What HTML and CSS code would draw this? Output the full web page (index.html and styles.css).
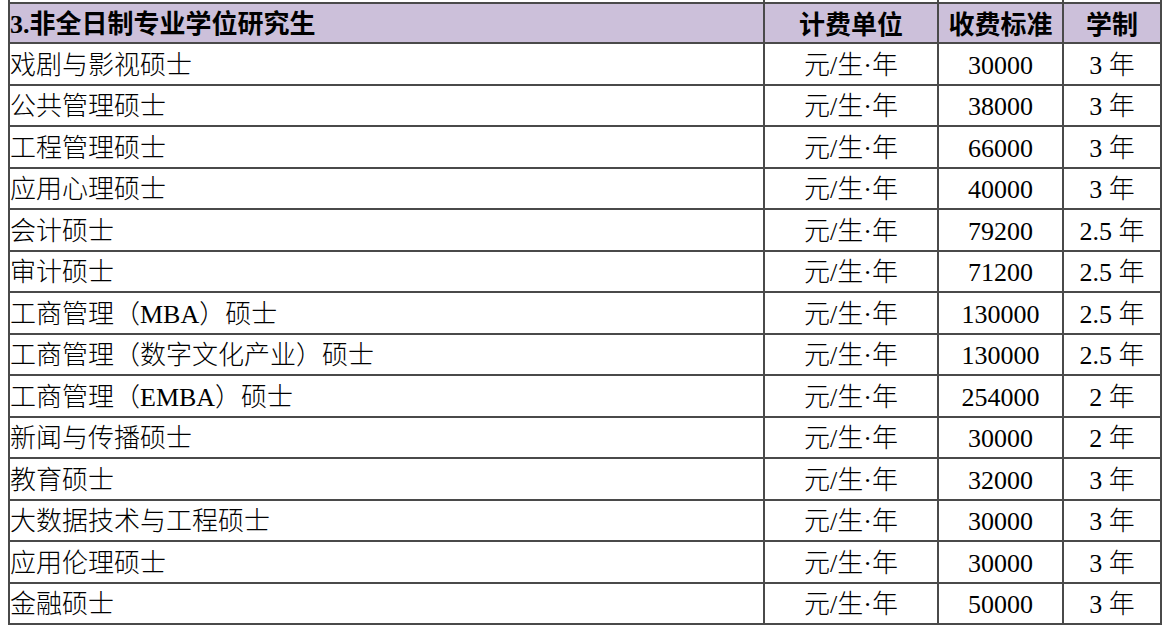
FILE: index.html
```html
<!DOCTYPE html>
<html lang="zh-CN">
<head>
<meta charset="utf-8">
<title>非全日制专业学位研究生收费标准</title>
<link rel="stylesheet" href="styles.css">
</head>
<body>
<table class="fees">
  <colgroup>
    <col class="c-name">
    <col class="c-unit">
    <col class="c-fee">
    <col class="c-years">
  </colgroup>
  <tbody>
    <tr class="strip"><td></td><td></td><td></td><td></td></tr>
    <tr class="head">
      <td class="name"><span class="num">3.</span>非全日制专业学位研究生</td>
      <td>计费单位</td>
      <td>收费标准</td>
      <td>学制</td>
    </tr>
    <tr><td class="name">戏剧与影视硕士</td><td>元/生·年</td><td>30000</td><td>3 年</td></tr>
    <tr><td class="name">公共管理硕士</td><td>元/生·年</td><td>38000</td><td>3 年</td></tr>
    <tr><td class="name">工程管理硕士</td><td>元/生·年</td><td>66000</td><td>3 年</td></tr>
    <tr><td class="name">应用心理硕士</td><td>元/生·年</td><td>40000</td><td>3 年</td></tr>
    <tr><td class="name">会计硕士</td><td>元/生·年</td><td>79200</td><td>2.5 年</td></tr>
    <tr><td class="name">审计硕士</td><td>元/生·年</td><td>71200</td><td>2.5 年</td></tr>
    <tr><td class="name">工商管理（MBA）硕士</td><td>元/生·年</td><td>130000</td><td>2.5 年</td></tr>
    <tr><td class="name">工商管理（数字文化产业）硕士</td><td>元/生·年</td><td>130000</td><td>2.5 年</td></tr>
    <tr><td class="name">工商管理（EMBA）硕士</td><td>元/生·年</td><td>254000</td><td>2 年</td></tr>
    <tr><td class="name">新闻与传播硕士</td><td>元/生·年</td><td>30000</td><td>2 年</td></tr>
    <tr><td class="name">教育硕士</td><td>元/生·年</td><td>32000</td><td>3 年</td></tr>
    <tr><td class="name">大数据技术与工程硕士</td><td>元/生·年</td><td>30000</td><td>3 年</td></tr>
    <tr><td class="name">应用伦理硕士</td><td>元/生·年</td><td>30000</td><td>3 年</td></tr>
    <tr><td class="name">金融硕士</td><td>元/生·年</td><td>50000</td><td>3 年</td></tr>
  </tbody>
</table>
</body>
</html>
```
FILE: styles.css
```css
html, body {
  background: #ffffff;
}
body {
  margin: 0 0 0 8px;
  font-family: "Liberation Serif", "Noto Sans CJK SC", serif;
  color: #000;
}
.fees {
  border-collapse: collapse;
  table-layout: fixed;
  width: 1152px;
}
.c-name { width: 755px; }
.c-unit { width: 174px; }
.c-fee { width: 125px; }
.c-years { width: 98px; }

.fees td {
  border: 2px solid #4a4a4a;
  height: 35.5px;
  padding: 4px 0 0 0;
  font-size: 26px;
  font-weight: 300;
  line-height: 24px;
  text-align: center;
  vertical-align: middle;
  white-space: nowrap;
  overflow: hidden;
}
.fees td.name {
  text-align: left;
  padding-left: 0;
}
.fees .strip td {
  border-top: none;
  height: 2px;
  padding: 0;
  font-size: 0;
  line-height: 0;
}
.fees .head td {
  background: #ccc0da;
  font-family: "Liberation Sans", "Noto Sans CJK SC", sans-serif;
  font-size: 26px;
  font-weight: 700;
  height: 35px;
  padding-top: 3px;
}
.fees .head .num {
  font-family: "Liberation Serif", serif;
  font-weight: 700;
}
```
